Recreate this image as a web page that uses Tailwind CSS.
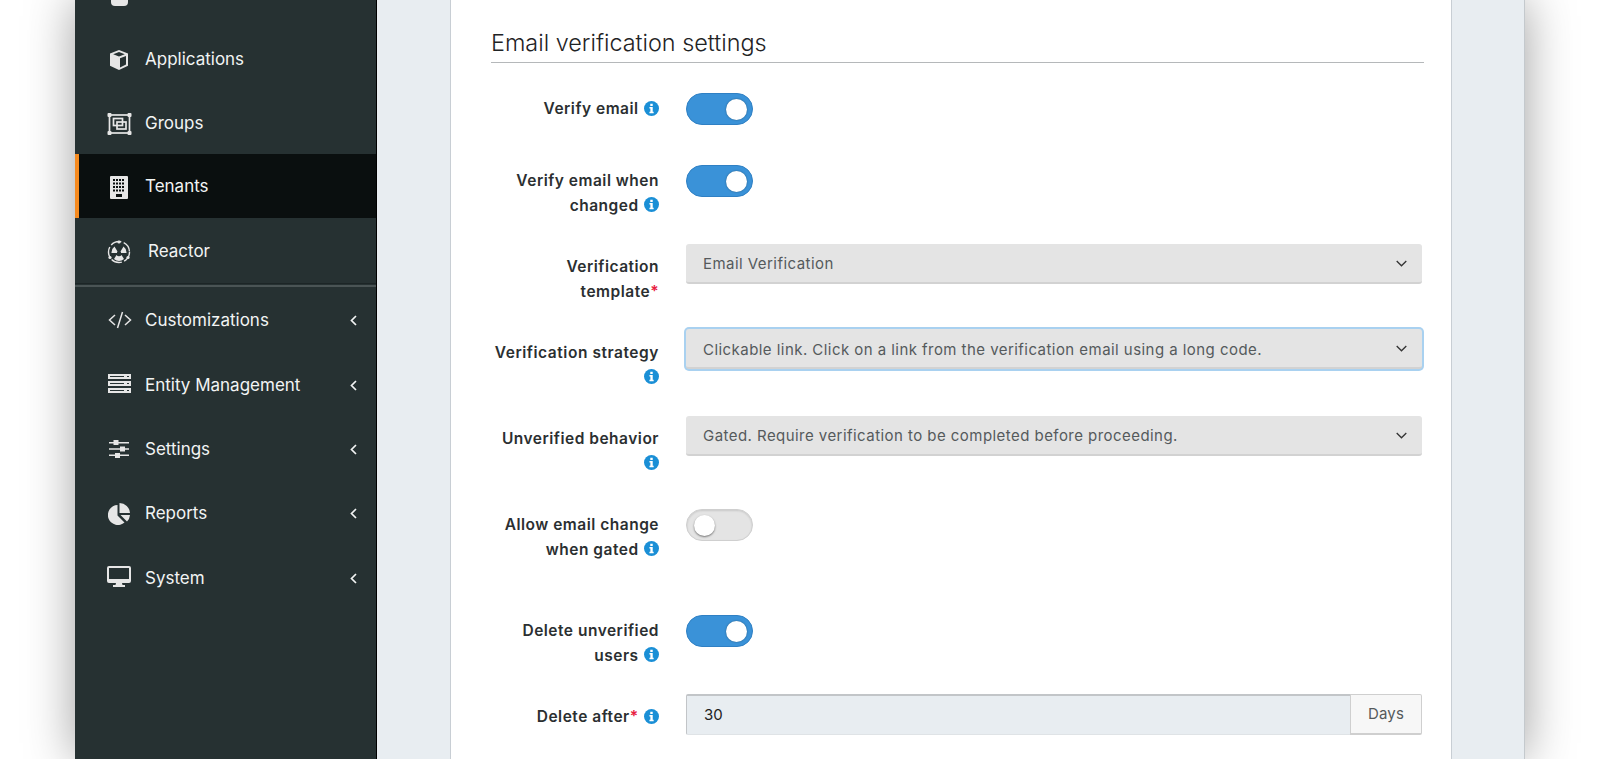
<!DOCTYPE html>
<html lang="en">

<head>
    <meta charset="UTF-8">
    <title>Tenants - Email verification settings</title>
    <script src="https://cdn.jsdelivr.net/npm/@tailwindcss/browser@4"></script>
</head>

<body class="bg-white h-screen overflow-hidden font-['Inter',sans-serif]">
    <div class="ml-[75px] w-[1450px] h-[759px] flex shadow-[0_0_46px_rgba(0,0,0,0.38)] bg-[#e8edf1]">

        <!-- Sidebar -->
        <aside class="w-[302px] shrink-0 h-full bg-[#263132] border-r border-black text-[#f2f4f4] text-[17px] overflow-hidden">
            <!-- Users, cut off by the top of the window -->
            <a class="h-[64px] -mt-[38px] flex items-center pl-[36px]">
                <div class="w-[17px] h-[24px] bg-[#e6e6e6] rounded-[4px] mr-[17px]"></div>
                <span>Users</span>
            </a>

            <!-- Applications -->
            <a class="h-[64px] pt-[3px] flex items-center pl-[33px]">
                <svg class="w-[22px] h-[22px] mr-[15px]" viewBox="0 0 22 22"><path fill="#e6e6e6" d="M11 1l9 3.600v12.200L11 21l-9-4.200V4.600z"/><path fill="#263132" d="M11 3l5.800 2.300L11 7.600 5.200 5.300zM12 9.300l6-2.400v8.700l-6 2.800z"/></svg>
                <span>Applications</span>
            </a>

            <!-- Groups -->
            <a class="h-[64px] pt-[3px] flex items-center pl-[32px]">
                <svg class="w-[25px] h-[22px] mr-[13px]" viewBox="0 0 25 22" fill="none" stroke="#e6e6e6" stroke-width="1.700"><rect x="2.500" y="2" width="20" height="18"/><rect x="6.500" y="5.500" width="9" height="7"/><rect x="10" y="9" width="9" height="7"/><g fill="#e6e6e6" stroke="none"><rect x="0.500" width="4" height="4" rx="1"/><rect x="20.500" width="4" height="4" rx="1"/><rect x="0.500" y="18" width="4" height="4" rx="1"/><rect x="20.500" y="18" width="4" height="4" rx="1"/></g></svg>
                <span>Groups</span>
            </a>

            <!-- Tenants (active) -->
            <a class="h-[64px] pt-[2px] flex items-center pl-[31px] border-l-[4px] border-[#f58a1f] bg-[#0a0f0f]">
                <svg class="w-[18px] h-[23px] mr-[17px]" viewBox="0 0 18 23"><rect width="18" height="23" rx="1" fill="#e6e6e6"/><path fill="#0a0f0f" d="M3 3h2v2H3zM6 3h2v2H6zM9 3h2v2H9zM12 3h2v2h-2zM3 6.500h2v2H3zM6 6.500h2v2H6zM9 6.500h2v2H9zM12 6.500h2v2h-2zM3 10h2v2H3zM6 10h2v2H6zM9 10h2v2H9zM12 10h2v2h-2zM3 13.500h2v2H3zM6 13.500h2v2H6zM9 13.500h2v2H9zM12 13.500h2v2h-2zM6 18h6v3H6z"/></svg>
                <span>Tenants</span>
            </a>

            <!-- Reactor -->
            <a class="h-[66px] pt-[2px] flex items-center pl-[32px]">
                <svg class="w-[24px] h-[24px] mr-[17px] -mt-[1px]" viewBox="0 0 24 24"><circle cx="12" cy="12" r="10.500" fill="none" stroke="#e6e6e6" stroke-width="1.400" stroke-dasharray="11 2.500"/><circle cx="12" cy="2" r="1.600" fill="#e6e6e6"/><circle cx="3" cy="17.500" r="1.600" fill="#e6e6e6"/><circle cx="21" cy="17.500" r="1.600" fill="#e6e6e6"/><path fill="#e6e6e6" d="M7.500 6.500l3 5a2 2 0 00-.5 1.500H4.500a7.500 7.500 0 013-6.500zM16.500 6.500l-3 5a2 2 0 01.5 1.500h5.500a7.500 7.500 0 00-3-6.500zM9.500 15l-2.500 4a7.500 7.500 0 0010 0l-2.500-4a3 3 0 01-5 0z"/></svg>
                <span>Reactor</span>
            </a>

            <!-- Divider -->
            <div class="h-[4px] border-t border-[#1c2526] border-b-2 border-b-[#4a5455] -mt-[1px] mb-[1px]"></div>

            <!-- Customizations -->
            <a class="h-[64.500px] flex items-center pl-[33px] pr-[19px] justify-between">
                <span class="flex items-center">
                    <svg class="w-[24px] h-[18px] mr-[13px]" viewBox="0 0 24 18" fill="none" stroke="#e6e6e6" stroke-width="1.500"><path d="M7 4l-5.500 5L7 14M17 4l5.500 5L17 14M14.500 1L9.500 17"/></svg>
                    <span>Customizations</span>
                </span>
                <svg class="w-[7px] h-[11px]" viewBox="0 0 7 11" fill="none" stroke="#f2f4f4" stroke-width="1.700"><path d="M6 1L1.500 5.500 6 10"/></svg>
            </a>

            <!-- Entity Management -->
            <a class="h-[64.500px] pt-[1px] flex items-center pl-[33px] pr-[19px] justify-between">
                <span class="flex items-center">
                    <svg class="w-[23px] h-[19px] mr-[14px] -mt-[3px]" viewBox="0 0 23 19"><path fill="#e6e6e6" d="M0 0h23v5H0zM0 7h23v5H0zM0 14h23v5H0z"/><path fill="#263132" d="M2 2h14v1H2zM19 2h2v1h-2zM2 9h14v1H2zM19 9h2v1h-2zM2 16h14v1H2zM19 16h2v1h-2z"/></svg>
                    <span>Entity Management</span>
                </span>
                <svg class="w-[7px] h-[11px]" viewBox="0 0 7 11" fill="none" stroke="#f2f4f4" stroke-width="1.700"><path d="M6 1L1.500 5.500 6 10"/></svg>
            </a>

            <!-- Settings -->
            <a class="h-[64.500px] flex items-center pl-[34px] pr-[19px] justify-between">
                <span class="flex items-center">
                    <svg class="w-[20px] h-[18px] mr-[16px]" viewBox="0 0 20 18"><path fill="#e6e6e6" d="M0 2h20v1.500H0zM0 8.200h20v1.500H0zM0 14.500h20V16H0z"/><path fill="#e6e6e6" d="M4.500 0h5v5h-5zM11 6.500h5v5h-5zM6 13h5v5H6z"/></svg>
                    <span>Settings</span>
                </span>
                <svg class="w-[7px] h-[11px]" viewBox="0 0 7 11" fill="none" stroke="#f2f4f4" stroke-width="1.700"><path d="M6 1L1.500 5.500 6 10"/></svg>
            </a>

            <!-- Reports -->
            <a class="h-[64.500px] flex items-center pl-[33px] pr-[19px] justify-between">
                <span class="flex items-center">
                    <svg class="w-[22px] h-[22px] mr-[15px]" viewBox="0 0 22 22"><path fill="#e6e6e6" d="M9.500 2v10.500l7 7A10 10 0 119.500 2z"/><path fill="#e6e6e6" d="M11.500 0A10.500 10.500 0 0122 10H11.500zM12.500 12H22a10 10 0 01-3 6.500z"/></svg>
                    <span>Reports</span>
                </span>
                <svg class="w-[7px] h-[11px]" viewBox="0 0 7 11" fill="none" stroke="#f2f4f4" stroke-width="1.700"><path d="M6 1L1.500 5.500 6 10"/></svg>
            </a>

            <!-- System -->
            <a class="h-[64.500px] flex items-center pl-[32px] pr-[19px] justify-between">
                <span class="flex items-center">
                    <svg class="w-[24px] h-[21px] mr-[14px] -mt-[4px]" viewBox="0 0 24 21"><path fill="#e6e6e6" d="M2 0h20a2 2 0 012 2v13a2 2 0 01-2 2h-7l.5 2H18v2H6v-2h2.500L9 17H2a2 2 0 01-2-2V2a2 2 0 012-2z"/><rect x="2" y="2" width="20" height="11" fill="#263132"/></svg>
                    <span>System</span>
                </span>
                <svg class="w-[7px] h-[11px]" viewBox="0 0 7 11" fill="none" stroke="#f2f4f4" stroke-width="1.700"><path d="M6 1L1.500 5.500 6 10"/></svg>
            </a>
        </aside>

        <!-- Main content -->
        <main class="flex-1 h-full border-r border-[#c4c9cd] overflow-hidden pl-[73px]">
            <section class="w-[1002px] h-full bg-white border-x border-[#c8ced4] pl-[40px] text-[#2b2f31]">

                <!-- Heading -->
                <h2 class="w-[933px] h-[63px] pt-[26px] mb-[30px] border-b border-[#b5b8ba] text-[23.400px] leading-[34px] font-light text-[#1f2325]">Email verification settings</h2>

                <!-- Verify email -->
                <div class="flex h-[72px]">
                    <label class="w-[168px] pt-[4px] text-right text-[15.500px] leading-[24.500px] font-semibold tracking-[0.5px]">Verify email
                        <svg class="inline-block w-[15px] h-[15px] ml-[1px] -mt-[3px]" viewBox="0 0 16 16"><circle cx="8" cy="8" r="8" fill="#1a8fd6"/><path fill="#fff" d="M6.700 3h2.600v2.300H6.700zM5.800 6.500h3.500v5h1v1.500H5.800v-1.500h1v-3.500h-1z"/></svg>
                    </label>
                    <div class="ml-[27px] w-[67px] h-[32px] rounded-full bg-[#3a92d8] border border-[#2f80c4] flex items-center justify-end pr-[5px]">
                        <div class="w-[21px] h-[21px] rounded-full bg-white shadow-[0_0_2px_rgba(0,0,0,0.4)]"></div>
                    </div>
                </div>

                <!-- Verify email when changed -->
                <div class="flex h-[79px]">
                    <label class="w-[168px] pt-[4px] text-right text-[15.500px] leading-[24.500px] font-semibold tracking-[0.5px]">Verify email when changed
                        <svg class="inline-block w-[15px] h-[15px] ml-[1px] -mt-[3px]" viewBox="0 0 16 16"><circle cx="8" cy="8" r="8" fill="#1a8fd6"/><path fill="#fff" d="M6.700 3h2.600v2.300H6.700zM5.800 6.500h3.500v5h1v1.500H5.800v-1.500h1v-3.500h-1z"/></svg>
                    </label>
                    <div class="ml-[27px] w-[67px] h-[32px] rounded-full bg-[#3a92d8] border border-[#2f80c4] flex items-center justify-end pr-[5px]">
                        <div class="w-[21px] h-[21px] rounded-full bg-white shadow-[0_0_2px_rgba(0,0,0,0.4)]"></div>
                    </div>
                </div>

                <!-- Verification template -->
                <div class="flex h-[85px]">
                    <label class="w-[168px] pt-[11px] text-right text-[15.500px] leading-[24.500px] font-semibold tracking-[0.5px]">Verification template<span class="text-[#e8203f]">*</span></label>
                    <div class="ml-[27px] w-[736px] h-[40px] bg-[#e4e4e4] border-b-2 border-[#d2d2d2] rounded-[3px] flex items-center justify-between pl-[17px] pr-[15px] text-[15px] tracking-[0.45px] text-[#555a5c]">
                        <span class="pt-[2px]">Email Verification</span>
                        <svg class="w-[11px] h-[7px] mt-[1px]" viewBox="0 0 11 7" fill="none" stroke="#333" stroke-width="1.300"><path d="M.7 1l4.800 4.800L10.300 1"/></svg>
                    </div>
                </div>

                <!-- Verification strategy (focused) -->
                <div class="flex h-[87px]">
                    <label class="w-[168px] pt-[12px] text-right text-[15.500px] leading-[24.500px] font-semibold tracking-[0.55px]">Verification strategy
                        <svg class="inline-block w-[15px] h-[15px] ml-[1px] -mt-[3px]" viewBox="0 0 16 16"><circle cx="8" cy="8" r="8" fill="#1a8fd6"/><path fill="#fff" d="M6.700 3h2.600v2.300H6.700zM5.800 6.500h3.500v5h1v1.500H5.800v-1.500h1v-3.500h-1z"/></svg>
                    </label>
                    <div class="ml-[27px] w-[736px] h-[40px] bg-[#e4e4e4] border-b-2 border-[#d2d2d2] rounded-[3px] ring-2 ring-[#a9d1f0] flex items-center justify-between pl-[17px] pr-[15px] text-[15px] tracking-[0.45px] text-[#555a5c]">
                        <span class="pt-[4px]">Clickable link. Click on a link from the verification email using a long code.</span>
                        <svg class="w-[11px] h-[7px] mt-[1px]" viewBox="0 0 11 7" fill="none" stroke="#333" stroke-width="1.300"><path d="M.7 1l4.800 4.800L10.300 1"/></svg>
                    </div>
                </div>

                <!-- Unverified behavior -->
                <div class="flex h-[93px]">
                    <label class="w-[168px] pt-[11px] text-right text-[15.500px] leading-[24.500px] font-semibold tracking-[0.5px]">Unverified behavior
                        <svg class="inline-block w-[15px] h-[15px] ml-[1px] -mt-[3px]" viewBox="0 0 16 16"><circle cx="8" cy="8" r="8" fill="#1a8fd6"/><path fill="#fff" d="M6.700 3h2.600v2.300H6.700zM5.800 6.500h3.500v5h1v1.500H5.800v-1.500h1v-3.500h-1z"/></svg>
                    </label>
                    <div class="ml-[27px] w-[736px] h-[40px] bg-[#e4e4e4] border-b-2 border-[#d2d2d2] rounded-[3px] flex items-center justify-between pl-[17px] pr-[15px] text-[15px] tracking-[0.45px] text-[#555a5c]">
                        <span class="pt-[2px]">Gated. Require verification to be completed before proceeding.</span>
                        <svg class="w-[11px] h-[7px] mt-[1px]" viewBox="0 0 11 7" fill="none" stroke="#333" stroke-width="1.300"><path d="M.7 1l4.800 4.800L10.300 1"/></svg>
                    </div>
                </div>

                <!-- Allow email change when gated -->
                <div class="flex h-[106px]">
                    <label class="w-[168px] pt-[4px] text-right text-[15.500px] leading-[24.500px] font-semibold tracking-[0.5px]">Allow email change when gated
                        <svg class="inline-block w-[15px] h-[15px] ml-[1px] -mt-[3px]" viewBox="0 0 16 16"><circle cx="8" cy="8" r="8" fill="#1a8fd6"/><path fill="#fff" d="M6.700 3h2.600v2.300H6.700zM5.800 6.500h3.500v5h1v1.500H5.800v-1.500h1v-3.500h-1z"/></svg>
                    </label>
                    <div class="ml-[27px] w-[67px] h-[32px] rounded-full bg-[#e4e4e4] border border-[#cfcfcf] shadow-[inset_0_1px_2px_rgba(0,0,0,0.12)] flex items-center pl-[7px]">
                        <div class="w-[21px] h-[21px] rounded-full bg-white shadow-[0_1px_2px_rgba(0,0,0,0.5)]"></div>
                    </div>
                </div>

                <!-- Delete unverified users -->
                <div class="flex h-[79px]">
                    <label class="w-[168px] pt-[4px] text-right text-[15.500px] leading-[24.500px] font-semibold tracking-[0.5px]">Delete unverified users
                        <svg class="inline-block w-[15px] h-[15px] ml-[1px] -mt-[3px]" viewBox="0 0 16 16"><circle cx="8" cy="8" r="8" fill="#1a8fd6"/><path fill="#fff" d="M6.700 3h2.600v2.300H6.700zM5.800 6.500h3.500v5h1v1.500H5.800v-1.500h1v-3.500h-1z"/></svg>
                    </label>
                    <div class="ml-[27px] w-[67px] h-[32px] rounded-full bg-[#3a92d8] border border-[#2f80c4] flex items-center justify-end pr-[5px]">
                        <div class="w-[21px] h-[21px] rounded-full bg-white shadow-[0_0_2px_rgba(0,0,0,0.4)]"></div>
                    </div>
                </div>

                <!-- Delete after -->
                <div class="flex">
                    <label class="w-[168px] pt-[11px] text-right text-[15.500px] leading-[24.500px] font-semibold tracking-[0.5px]">Delete after<span class="text-[#e8203f]">*</span>
                        <svg class="inline-block w-[15px] h-[15px] ml-[1px] -mt-[3px]" viewBox="0 0 16 16"><circle cx="8" cy="8" r="8" fill="#1a8fd6"/><path fill="#fff" d="M6.700 3h2.600v2.300H6.700zM5.800 6.500h3.500v5h1v1.500H5.800v-1.500h1v-3.500h-1z"/></svg>
                    </label>
                    <div class="ml-[27px] w-[736px] h-[41px] flex">
                        <div class="flex-1 bg-[#e8edf1] border-t-2 border-l border-[#c2c5c8] border-b border-b-[#dfe3e6] rounded-l-[2px] flex items-center pl-[17px] text-[15px] text-[#222]">30</div>
                        <div class="w-[72px] pt-[1px] bg-[#f7f7f7] border border-[#cfcfcf] border-b-2 rounded-r-[2px] flex items-center justify-center text-[15px] tracking-[0.2px] text-[#555a5c]">Days</div>
                    </div>
                </div>

            </section>
        </main>
    </div>
</body>

</html>
